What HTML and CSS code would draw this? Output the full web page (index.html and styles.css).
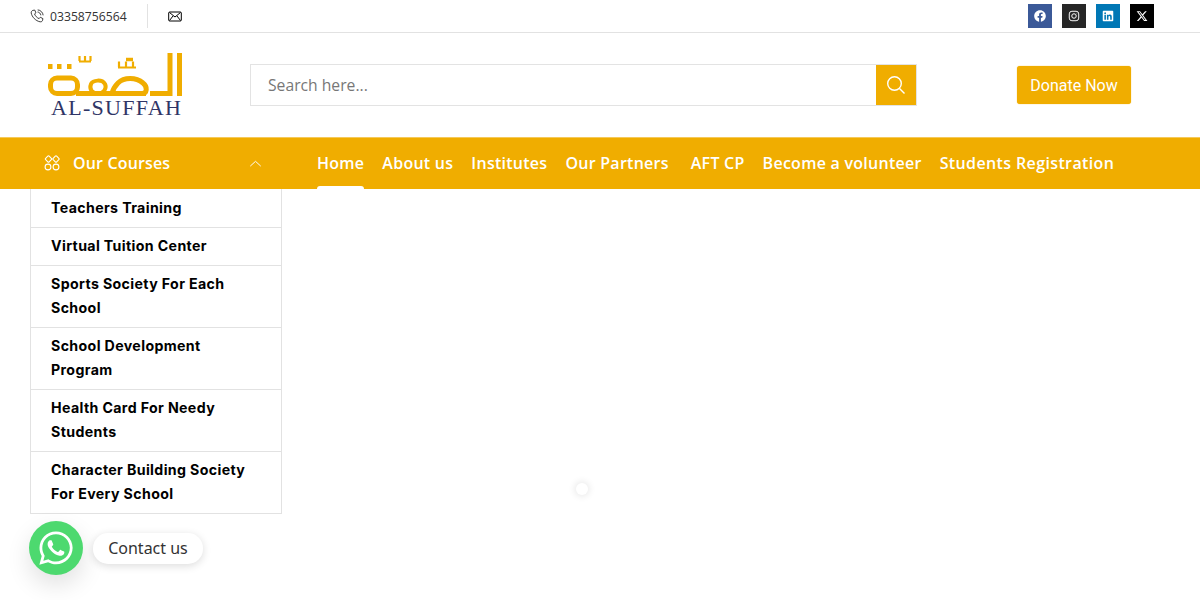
FILE: index.html
```html
<!DOCTYPE html>
<html lang="en">
<head>
<meta charset="utf-8">
<title>Al-Suffah</title>
<link rel="stylesheet" href="styles.css">
</head>
<body>
<div class="topbar">
  <div class="contact">
    <svg class="phone-icon" viewBox="0 0 16 16" fill="none" stroke="#222" stroke-width="1"><path d="M3.200 1.600 5.400 1.200 6.800 4.400 5.200 5.600C5.800 7.600 8 10.200 10.400 11L11.800 9.400 14.800 11 14.200 13.400C13.800 14.400 12.600 14.800 11.400 14.600 6.400 13.600 2.200 9 1.400 4.600 1.200 3.200 2 2 3.200 1.600Z"/><path d="M8.600 3.400C10.600 3.600 12.200 5.200 12.400 7.200M8.800 1C12 1.200 14.800 4 15 7.200"/></svg>
    <span class="phone">03358756564</span>
    <span class="divider"></span>
    <svg class="mail-icon" viewBox="0 0 14 11" fill="none" stroke="#000" stroke-width="1"><rect x=".7" y="1" width="12.600" height="9" rx="1"/><path d="M1.500 1.500 7 6 12.500 1.500M1.500 9.500 5 5M12.500 9.500 9 5"/></svg>
  </div>
  <div class="socials">
    <a class="social fb"><svg viewBox="0 0 512 512"><path d="M504 256C504 119 393 8 256 8S8 119 8 256c0 123.780 90.690 226.380 209.250 245V327.690h-63V256h63v-54.640c0-62.150 37-96.480 93.670-96.480 27.140 0 55.520 4.840 55.520 4.840v61h-31.280c-30.800 0-40.410 19.120-40.410 38.730V256h68.780l-11 71.690h-57.780V501C413.310 482.380 504 379.780 504 256z"/></svg></a>
    <a class="social ig"><svg viewBox="0 0 16 16" fill="none" stroke="#fff" stroke-width="1.300"><rect x="1.700" y="1.700" width="12.600" height="12.600" rx="3.500"/><circle cx="8" cy="8" r="3"/><circle cx="11.800" cy="4.200" r=".5" fill="#fff" stroke="none"/></svg></a>
    <a class="social li"><svg viewBox="0 0 448 512"><path d="M416 32H31.900C14.300 32 0 46.500 0 64.300v383.400C0 465.500 14.300 480 31.900 480H416c17.600 0 32-14.500 32-32.300V64.300c0-17.800-14.400-32.300-32-32.300zM135.400 416H69V202.200h66.500V416zm-33.200-243c-21.300 0-38.500-17.300-38.500-38.500S80.900 96 102.200 96c21.200 0 38.500 17.300 38.500 38.500 0 21.300-17.200 38.500-38.500 38.500zm282.100 243h-66.400V312c0-24.800-.5-56.700-34.500-56.700-34.600 0-39.900 27-39.900 54.900V416h-66.400V202.200h63.700v29.200h.9c8.900-16.800 30.600-34.500 62.900-34.500 67.200 0 79.700 44.300 79.700 101.900V416z"/></svg></a>
    <a class="social xx"><svg viewBox="0 0 512 512"><path d="M389.200 48h70.600L305.600 224.200 487.800 464H345L233.700 318.600 106.500 464H35.800L200.700 275.500 26.800 48H172.400L272.900 180.900 389.200 48zM364.400 421.800h39.100L151.100 88h-42L364.400 421.800z"/></svg></a>
  </div>
</div>

<header class="header">
  <div class="logo">
    <svg class="logo-mark" viewBox="0 0 140 47" fill="none" stroke="#f0ad00" stroke-width="5">
      <path d="M133.500 2V45"/>
      <path d="M124 2V42.500H104"/>
      <path d="M100 42.500H66C67 38 69 35 72 32C78 26 90 26 97 32C102 36 101 42.500 96 42.500"/>
      <path d="M66 42.500H30"/>
      <path d="M52 42.500C46 42.500 43 38 45 33C47 29 56 28 59 33C61 37 58 42.500 52 42.500Z" stroke-width="4"/>
      <rect x="4.500" y="27" width="27" height="15.500" rx="6.500" stroke-width="5"/>
      <path d="M2 15.500H6.500M11 15.500H15.500M21 15.500H25.500" stroke-width="5"/>
      <path d="M33 10.500H45M33.500 5V10M39 5V10M44.500 5V10M72 16.500H90M73 10.500V16M80 10.500V16M87 10.500V16" stroke-width="2.200"/>
      <path d="M80 8.500H87" stroke-width="3.500"/>
    </svg>
    <span class="logo-name">AL-SUFFAH</span>
  </div>
  <form class="search">
    <input class="search-input" type="text" placeholder="Search here...">
    <button class="search-btn" type="button" aria-label="Search"><svg viewBox="0 0 20 20" fill="none" stroke="#fff" stroke-width="1.400"><circle cx="8.500" cy="8.500" r="6.800"/><path d="M13.500 13.500 18.500 18.500"/></svg></button>
  </form>
  <a class="donate">Donate Now</a>
</header>

<nav class="nav">
  <div class="courses">
    <svg class="grid-icon" viewBox="0 0 16 16" fill="none" stroke="#fff" stroke-width="1.100"><rect x="2" y="1.500" width="5" height="5" rx="1" transform="rotate(45 4.500 4)"/><rect x="9.500" y="1.500" width="5" height="5" rx="1" transform="rotate(45 12 4)"/><circle cx="4" cy="12" r="2.900"/><circle cx="12" cy="12" r="2.900"/></svg>
    <span class="courses-label">Our Courses</span>
    <svg class="chevron" viewBox="0 0 14 8" fill="none" stroke="#fff" stroke-width="1.100"><path d="M1 7 7 1.500 13 7"/></svg>
  </div>
  <ul class="menu">
    <li class="menu-item active">Home</li>
    <li class="menu-item">About us</li>
    <li class="menu-item">Institutes</li>
    <li class="menu-item wide">Our Partners</li>
    <li class="menu-item">AFT CP</li>
    <li class="menu-item">Become a volunteer</li>
    <li class="menu-item last">Students Registration</li>
  </ul>
</nav>

<ul class="sidebar">
  <li class="side-item">Teachers Training</li>
  <li class="side-item">Virtual Tuition Center</li>
  <li class="side-item">Sports Society For Each School</li>
  <li class="side-item">School Development Program</li>
  <li class="side-item">Health Card For Needy Students</li>
  <li class="side-item">Character Building Society For Every School</li>
</ul>

<span class="loader"></span>

<div class="chat">
  <span class="chat-btn"><svg viewBox="0 0 448 512"><path d="M380.900 97.100C339 55.100 283.200 32 223.900 32c-122.400 0-222 99.600-222 222 0 39.100 10.200 77.300 29.600 111L0 480l117.700-30.900c32.400 17.700 68.900 27 106.100 27h.1c122.300 0 224.100-99.600 224.100-222 0-59.300-25.200-115-67.100-157zm-157 341.600c-33.200 0-65.700-8.900-94-25.700l-6.700-4-69.800 18.300L72 359.200l-4.400-7c-18.500-29.400-28.200-63.300-28.200-98.200 0-101.700 82.800-184.500 184.600-184.500 49.300 0 95.600 19.200 130.400 54.100 34.800 34.900 56.200 81.200 56.100 130.500 0 101.800-84.900 184.600-186.600 184.600zm101.200-138.200c-5.500-2.800-32.800-16.200-37.900-18-5.100-1.900-8.800-2.800-12.500 2.800-3.700 5.600-14.300 18-17.600 21.800-3.200 3.700-6.500 4.200-12 1.400-32.600-16.300-54-29.100-75.500-66-5.700-9.800 5.700-9.100 16.300-30.300 1.800-3.700.9-6.900-.5-9.700-1.400-2.800-12.500-30.100-17.100-41.200-4.500-10.800-9.100-9.300-12.500-9.500-3.200-.2-6.900-.2-10.600-.2-3.700 0-9.700 1.400-14.800 6.900-5.100 5.600-19.400 19-19.400 46.300 0 27.300 19.900 53.700 22.600 57.400 2.800 3.700 39.100 59.700 94.800 83.800 35.200 15.200 49 16.500 66.600 13.900 10.700-1.600 32.800-13.400 37.400-26.400 4.600-13 4.600-24.100 3.200-26.400-1.300-2.500-5-3.900-10.500-6.600z"/></svg></span>
  <span class="chat-label">Contact us</span>
</div>
</body>
</html>
```
FILE: styles.css
```css
* { box-sizing: border-box; }
html, body { margin: 0; padding: 0; height: 600px; overflow: hidden; background: #fff; }
body { font-family: "Open Sans", sans-serif; color: #222; }
ul { list-style: none; margin: 0; padding: 0; }

.topbar {
  height: 33px;
  border-bottom: 1px solid #e2e2e2;
  padding: 0 46px 0 30px;
  display: flex;
  align-items: center;
  justify-content: space-between;
}
.contact { display: flex; align-items: center; }
.phone-icon { width: 14px; height: 14px; margin-right: 6px; }
.phone { font-size: 12.200px; color: #333; width: 77px; white-space: nowrap; }
.divider { width: 1px; height: 24px; background: #e2e2e2; margin: 0 20px; }
.mail-icon { width: 14px; height: 11px; display: block; }
.socials { display: flex; gap: 10px; }
.social { width: 24px; height: 24px; display: flex; align-items: center; justify-content: center; }
.social svg { width: 12px; height: 12px; fill: #fff; }
.social.ig svg { fill: none; }
.fb { background: #3b5998; }
.ig { background: #262626; }
.li { background: #0077b5; }
.xx { background: #000; }

.header {
  height: 104px;
  padding: 0 69px 0 46px;
  display: flex;
  align-items: center;
}
.logo { width: 204px; display: flex; flex-direction: column; height: 68px; }
.logo-mark { width: 140px; height: 47px; flex: none; display: block; }
.logo-name {
  font-family: "Liberation Serif", serif;
  font-size: 22px;
  line-height: 21px;
  letter-spacing: 1.300px;
  color: #2f3566;
  margin-top: -1px;
  padding-left: 5px;
  white-space: nowrap;
}
.search { display: flex; width: 667px; height: 42px; border: 1px solid #e3e3e3; }
.search-input {
  flex: 1;
  min-width: 0;
  border: 0;
  outline: 0;
  padding: 0 17px;
  font-family: "Open Sans", sans-serif;
  font-size: 15.700px;
  color: #666;
}
.search-input::placeholder { color: #777; opacity: 1; }
.search-btn {
  width: 40px;
  border: 0;
  padding: 0;
  background: #f0ad00;
  display: flex;
  align-items: center;
  justify-content: center;
}
.search-btn svg { width: 20px; height: 20px; }
.donate {
  margin-left: auto;
  width: 114px;
  height: 38px;
  background: #f0ad00;
  border-radius: 3px;
  box-shadow: 0 0 1px #f0ad00;
  color: #fff;
  font-family: Roboto, sans-serif;
  font-size: 16px;
  display: flex;
  align-items: center;
  justify-content: center;
}

.nav {
  height: 52px;
  background: #f0ad00;
  border-top: 1px solid #f5c95a;
  padding-left: 30px;
  display: flex;
  color: #fff;
}
.courses {
  width: 252px;
  padding: 0 20px 1px 14px;
  display: flex;
  align-items: center;
  margin-right: 35px;
}
.grid-icon { width: 16px; height: 16px; margin-right: 13px; }
.courses-label { font-size: 16px; font-weight: 600; letter-spacing: .15px; }
.chevron { width: 13px; height: 7px; margin-left: auto; }
.menu { display: flex; gap: 18px; }
.menu-item {
  font-size: 16px;
  font-weight: 600;
  letter-spacing: .26px;
  line-height: 51px;
  height: 51px;
  position: relative;
  white-space: nowrap;
}
.menu-item.wide { margin-right: 4px; }
.menu-item.last { letter-spacing: .38px; }
.menu-item.active::after {
  content: "";
  position: absolute;
  left: 0;
  right: 0;
  bottom: 0;
  height: 3px;
  background: #fff;
  border-radius: 3px 3px 0 0;
}

.sidebar {
  width: 252px;
  margin-left: 30px;
  padding-top: 1px;
  border: 1px solid #e2e2e2;
  border-top: 0;
  font-family: "Inter", sans-serif;
}
.side-item {
  padding: 6px 20px 7px;
  font-size: 14.200px;
  font-weight: 700;
  letter-spacing: .36px;
  line-height: 24px;
  color: #000;
  border-bottom: 1px solid #e2e2e2;
}
.side-item:last-child { border-bottom: 0; }

.loader {
  position: absolute;
  left: 576px;
  top: 483px;
  width: 12px;
  height: 12px;
  border-radius: 50%;
  background: #fff;
  box-shadow: 0 0 6px 2px #ececec;
}

.chat { position: absolute; left: 29px; top: 521px; display: flex; align-items: center; }
.chat-btn {
  width: 54px;
  height: 54px;
  border-radius: 50%;
  background: #4dd96f;
  box-shadow: 0 10px 25px rgba(0, 0, 0, .12);
  display: flex;
  align-items: center;
  justify-content: center;
}
.chat-btn svg { width: 34px; height: 38px; fill: #fff; }
.chat-label {
  margin-left: 10px;
  width: 110px;
  height: 31px;
  border-radius: 15px;
  background: #fff;
  box-shadow: 0 2px 8px rgba(0, 0, 0, .14);
  font-family: "Noto Sans", sans-serif;
  font-size: 16px;
  color: #333;
  display: flex;
  align-items: center;
  justify-content: center;
}
```
